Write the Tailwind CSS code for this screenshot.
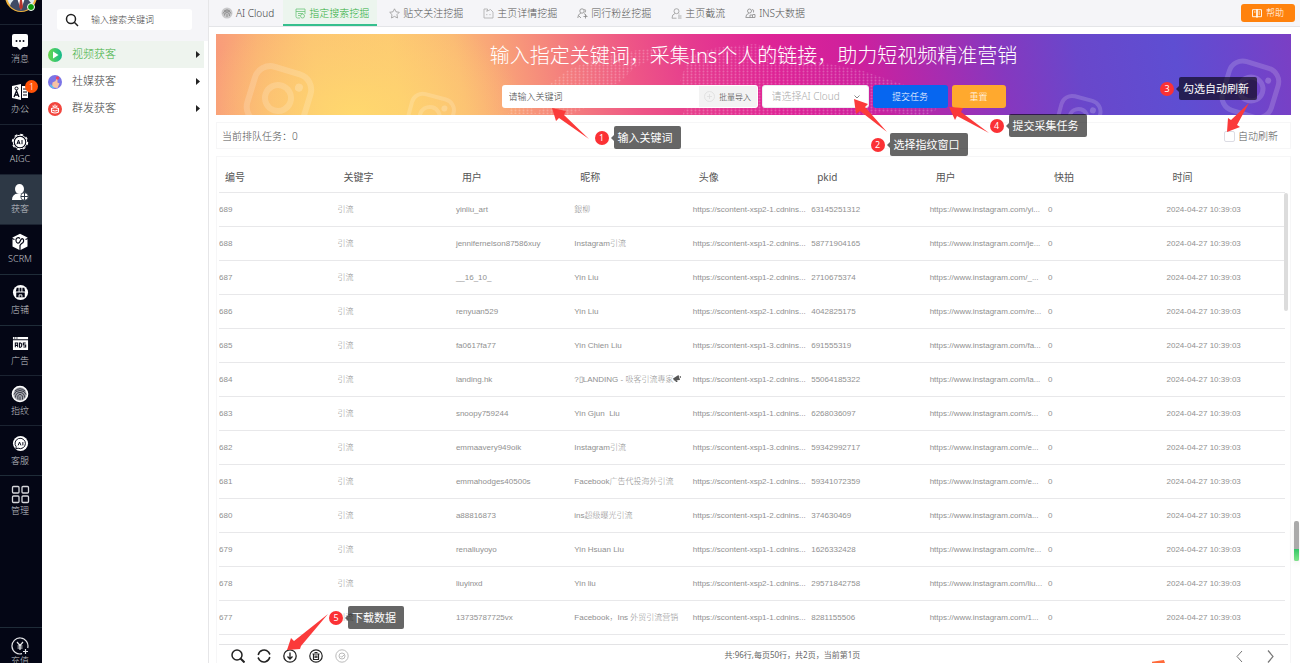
<!DOCTYPE html>
<html lang="zh-CN">
<head>
<meta charset="utf-8">
<meta name="viewport" content="width=device-width, initial-scale=1">
<title>指定搜索挖掘</title>
<script src="https://cdn.jsdelivr.net/npm/@tailwindcss/browser@4"></script>
</head>
<body class="relative flex h-screen overflow-hidden bg-white font-['Noto_Sans','Noto_Sans_CJK_SC',sans-serif] font-light text-[#555]">

<!-- Primary navigation -->
<nav class="flex w-[42px] shrink-0 flex-col overflow-hidden bg-[#040615] text-[9px] leading-3 text-[#c4c6cc]">
  <div class="relative flex h-[25px] shrink-0 items-end justify-center border-b border-[#1b2331] pb-3">
    <svg class="h-8 w-8 shrink-0" viewBox="0 0 32 32"><circle cx="16" cy="16" r="15" fill="#dfe9ee" stroke="#efb23c" stroke-width="2"/><circle cx="16" cy="12" r="6" fill="#e9b48d"/><path d="M5 26q2-7 8-8l3 3 3-3q6 1 8 8-5 5-11 5T5 26z" fill="#3f4b66"/><path d="M12 18l4 12 4-12-4 2z" fill="#fff"/><path d="M15 20h2l1 7-2 3-2-3z" fill="#b8352c"/></svg>
    <span class="absolute right-[7px] bottom-[13px] h-2 w-2 rounded-full border border-white bg-[#0c9d0c]"></span>
  </div>
  <a href="#" class="flex h-[50px] shrink-0 flex-col items-center gap-[2px] border-b border-[#1b2331] pr-[2px] pt-2">
    <svg class="h-[18px] w-[18px]" viewBox="0 0 18 18"><path d="M3 1h12a2 2 0 0 1 2 2v9a2 2 0 0 1-2 2h-3l-3 3-3-3H3a2 2 0 0 1-2-2V3a2 2 0 0 1 2-2z" fill="#fff"/><g fill="#040615"><circle cx="5.500" cy="8" r="1"/><circle cx="9" cy="8" r="1"/><circle cx="12.500" cy="8" r="1"/></g></svg>
    <span>消息</span>
  </a>
  <a href="#" class="relative flex h-[50px] shrink-0 flex-col items-center gap-[2px] border-b border-[#1b2331] pr-[2px] pt-2">
    <svg class="h-[18px] w-[18px]" viewBox="0 0 18 18"><path d="M1 3l9-2v16l-9-2z" fill="#fff"/><path d="M11 3h6v12h-6z" fill="#fff"/><path d="M12 6h4M12 9h4M12 12h4" stroke="#040615"/><circle cx="5.500" cy="5.500" r="1.500" fill="none" stroke="#040615"/><path d="M3 14l2.500-6L8 14M4 12h3" fill="none" stroke="#040615" stroke-width="1.300"/></svg>
    <span>办公</span>
    <span class="absolute top-[5px] left-[25px] flex h-[13px] w-[13px] items-center justify-center rounded-full bg-[#ff5208] text-[9px] text-white">1</span>
  </a>
  <a href="#" class="flex h-[50px] shrink-0 flex-col items-center gap-[2px] border-b border-[#1b2331] pr-[2px] pt-2">
    <svg class="h-[18px] w-[18px]" viewBox="0 0 18 18"><circle cx="9" cy="9" r="6.800" fill="none" stroke="#fff" stroke-width="1"/><circle cx="9" cy="9" r="7.600" fill="none" stroke="#fff" stroke-width="1.200" stroke-dasharray="3 2.970"/><circle cx="9" cy="9" r="5.200" fill="#fff"/><path d="M6 11.200L7.500 7 9 11.200M6.500 10h2M11 7v4.200" stroke="#040615" fill="none"/></svg>
    <span>AIGC</span>
  </a>
  <a href="#" class="flex h-[50px] shrink-0 flex-col items-center gap-[2px] border-b border-[#1b2331] bg-[#2d3845] pr-[2px] pt-2">
    <svg class="h-[18px] w-[18px]" viewBox="0 0 18 18"><ellipse cx="8.500" cy="6" rx="4.500" ry="5" fill="#fff"/><path d="M1 17q0-6 6-6.500h3q3 0 4 1.500v5z" fill="#fff"/><circle cx="13.500" cy="13.500" r="3.800" fill="#fff" stroke="#2d3845" stroke-width=".8"/><path d="M13.500 10v7M10 13.500h7" stroke="#2d3845" stroke-width="1"/></svg>
    <span>获客</span>
  </a>
  <a href="#" class="flex h-[50px] shrink-0 flex-col items-center gap-[2px] border-b border-[#1f2c38] pr-[2px] pt-2">
    <svg class="h-[18px] w-[18px]" viewBox="0 0 18 18"><path d="M9 .8l7.500 3.700v9L9 17.200 1.500 13.500v-9z" fill="#fff"/><path d="M9 5.500C7 3.500 4.500 5.500 5 8s3 3 4 .500S11 5 12 6s1 4-1.500 4.500L9 12.500V18M1 5.500l2.500 1M17 5.500l-2.500 1" fill="none" stroke="#040615" stroke-width="1.200"/></svg>
    <span>SCRM</span>
  </a>
  <a href="#" class="flex h-[51px] shrink-0 flex-col items-center gap-[3px] border-b border-[#1f2c38] pr-[2px] pt-[9px]">
    <svg class="h-[17px] w-[17px]" viewBox="0 0 18 18"><circle cx="9" cy="9" r="8" fill="#fff"/><path d="M5 4h2v4H4zM8 4h2v4H8zM11 4h2l1 4h-3zM4.500 9h9v5h-9z" fill="#040615"/><path d="M7.500 14v-2.500h3V14" fill="none" stroke="#fff"/></svg>
    <span>店铺</span>
  </a>
  <a href="#" class="flex h-[50px] shrink-0 flex-col items-center gap-[3px] border-b border-[#1b2331] pr-[2px] pt-[9px]">
    <svg class="h-[17px] w-[17px]" viewBox="0 0 18 18"><path d="M1 2h16v2.500H1zM1 5.500h16V16H1z" fill="#fff"/><path d="M2 3.200h1.500M4.500 3.200H6" stroke="#040615"/><path d="M3.500 13V8.500h2.500V13M3.500 11H6M8 8.500V13h1.200l1-1V9.500l-1-1zM14.500 8.500H12v2h2.500v2.300H12" fill="none" stroke="#040615" stroke-width="1.100"/></svg>
    <span>广告</span>
  </a>
  <a href="#" class="flex h-[50px] shrink-0 flex-col items-center gap-[2px] border-b border-[#1b2331] pr-[2px] pt-[9px]">
    <svg class="h-[18px] w-[18px]" viewBox="0 0 18 18"><circle cx="9" cy="9" r="7.500" fill="#a9abb2" stroke="#fff" stroke-width="1.600"/><g fill="none" stroke="#1a1c2a" stroke-width=".8"><path d="M4 6q5-4.500 10 0M3 9.500q1-4 6-4t6 4M4.500 12.500q0-5 4.500-5t4.500 5M7 14.500q-1-5 2-5t2.500 5M9 11.500V15"/></g></svg>
    <span>指纹</span>
  </a>
  <a href="#" class="flex h-[50px] shrink-0 flex-col items-center gap-[3px] border-b border-[#1f2c38] pr-[2px] pt-[9px]">
    <svg class="h-[17px] w-[17px]" viewBox="0 0 18 18"><circle cx="9" cy="9" r="8" fill="#fff"/><path d="M4.500 12.500a5.500 5.500 0 1 1 2 1.500l-2.500.5z" fill="none" stroke="#040615"/><path d="M6.500 11L8 7.500 9.500 11M11.500 7.500V11" fill="none" stroke="#040615"/></svg>
    <span>客服</span>
  </a>
  <a href="#" class="flex shrink-0 flex-col items-center gap-[1px] pr-[2px] pt-[9px]">
    <svg class="h-[19px] w-[19px]" viewBox="0 0 19 19" fill="none" stroke="#d5d6da" stroke-width="1.300"><rect x="1.500" y="1.500" width="6.500" height="6.500" rx="1"/><rect x="11" y="1.500" width="6.500" height="6.500" rx="1"/><rect x="1.500" y="11" width="6.500" height="6.500" rx="1"/><rect x="11" y="11" width="6.500" height="6.500" rx="1"/></svg>
    <span>管理</span>
  </a>
  <a href="#" class="mt-auto flex h-9 shrink-0 flex-col items-center overflow-hidden border-t border-[#1f2c38] pr-[2px] pt-[9px]">
    <svg class="h-[18px] w-[18px] shrink-0" viewBox="0 0 18 18" fill="none" stroke="#e4e5e8" stroke-width="1.200"><path d="M16.700 11A8 8 0 1 0 11 16.700"/><path d="M6 5l3 3.500L12 5M9 8.500V13M6.500 9h5M6.500 11h5M14.500 12v5M12 14.500h5"/></svg>
    <span class="shrink-0">充值</span>
  </a>
</nav>

<!-- Secondary navigation -->
<aside class="flex w-[167px] shrink-0 flex-col border-r border-[#e6e6e8] bg-white">
  <div class="bg-[#f5f5f8] pt-[9px] pr-4 pb-[11px] pl-[15px]">
    <label class="flex h-[21px] items-center gap-3 rounded-[3px] bg-white pl-2">
      <svg class="h-[14px] w-[14px] shrink-0" viewBox="0 0 14 14" fill="none" stroke="#222" stroke-width="1.500"><circle cx="6" cy="6" r="4.500"/><path d="M9.300 9.300L13 13"/></svg>
      <input type="text" aria-label="搜索" placeholder="输入搜索关键词" class="w-full min-w-0 bg-transparent text-[9px] leading-4 outline-none placeholder:text-[#444]">
    </label>
  </div>
  <a href="#" class="mr-1 flex h-[27px] items-center gap-[10px] bg-[#eef4ee] pr-1 pl-[6px] text-[11px] text-[#3fb03f]">
    <svg class="h-[14px] w-[14px]" viewBox="0 0 14 14"><defs><linearGradient id="g1"><stop offset="0" stop-color="#6bd84b"/><stop offset="1" stop-color="#14b98b"/></linearGradient></defs><circle cx="7" cy="7" r="7" fill="url(#g1)"/><path d="M5 3.500v7L10.500 7z" fill="#fff"/></svg>
    <span class="flex-1">视频获客</span>
    <svg class="h-[7px] w-[5px]" viewBox="0 0 5 7"><path d="M1 0l4 3.500L1 7z" fill="#222"/></svg>
  </a>
  <a href="#" class="mr-1 flex h-[27px] items-center gap-[10px] pr-1 pl-[6px] text-[11px] text-[#444]">
    <svg class="h-[14px] w-[14px]" viewBox="0 0 14 14"><circle cx="7" cy="7" r="7" fill="#7b74e6"/><path d="M4 12.500l.5-5 3-1.500 1-3 1 .5v4l2 1-2 4.500z" fill="#f6c2a5"/><path d="M2.500 9l4 4-2 .3L2 11z" fill="#58c1f2"/><circle cx="9.500" cy="3" r="1.700" fill="#e9466b"/></svg>
    <span class="flex-1">社媒获客</span>
    <svg class="h-[7px] w-[5px]" viewBox="0 0 5 7"><path d="M1 0l4 3.500L1 7z" fill="#222"/></svg>
  </a>
  <a href="#" class="mr-1 flex h-[27px] items-center gap-[10px] pr-1 pl-[6px] text-[11px] text-[#444]">
    <svg class="h-[14px] w-[14px]" viewBox="0 0 14 14"><circle cx="7" cy="7" r="7" fill="#f2453d"/><path d="M7 2.500v3M4.800 3.500l.8 1.500M9.200 3.500L8.400 5M3.500 6.500q3.500-1.500 7 0v3.500q-3.500 2-7 0zM4.500 8q2.500 2 5 0" fill="none" stroke="#fff" stroke-width="1.100"/></svg>
    <span class="flex-1">群发获客</span>
    <svg class="h-[7px] w-[5px]" viewBox="0 0 5 7"><path d="M1 0l4 3.500L1 7z" fill="#222"/></svg>
  </a>
</aside>

<main class="flex min-w-0 flex-1 flex-col">
  <!-- Tabs -->
  <header class="flex h-[27px] shrink-0 items-stretch border-b border-[#e4e5e8] bg-[#f5f5f8] text-[10px] text-[#555]">
    <a href="#" class="flex items-center gap-[3px] pr-[9px] pl-3 text-[#444]">
      <svg class="h-3 w-3" viewBox="0 0 12 12"><circle cx="6" cy="6" r="5.500" fill="#c9c9cb"/><path d="M3 4q3-2.500 6 0M2 6.500q.5-2.500 4-2.500t4 2.500M3.500 8.500Q3 5.500 6 5.500t2.500 3.500M6 7v3" fill="none" stroke="#777" stroke-width=".7"/></svg>AI Cloud</a>
    <a href="#" aria-current="page" class="flex items-center gap-[3px] border-b-2 border-[#35bf8d] bg-[#ecf5ee] pt-[2px] pr-2 pl-3 text-[#2fae3c]">
      <svg class="h-[11px] w-[11px]" viewBox="0 0 11 11" fill="none" stroke="#6cc478" stroke-width=".8"><path d="M5 10H2.500Q1 10 1 8.500V1h9v5M1 3.500h9M3 5.500h5M3 7.500h2"/><circle cx="7.500" cy="8" r="2"/></svg>指定搜索挖掘</a>
    <a href="#" class="flex items-center gap-[3px] pr-2 pl-3">
      <svg class="h-[11px] w-[11px]" viewBox="0 0 11 11" fill="none" stroke="#999" stroke-width=".8"><path d="M5.500.8l1.500 3 3.300.5L8 6.600l.5 3.400-3-1.600-3 1.600L3 6.600.7 4.300 4 3.800z"/></svg>贴文关注挖掘</a>
    <a href="#" class="flex items-center gap-[3px] pr-2 pl-3">
      <svg class="h-[11px] w-[11px]" viewBox="0 0 11 11" fill="none" stroke="#aaa" stroke-width=".8"><path d="M1 10V1h3.500v2L7.500 1.500 10 4v6zM3.800 6v1.200M7 6v1.200M4.500 3H3"/></svg>主页详情挖掘</a>
    <a href="#" class="flex items-center gap-[3px] pr-2 pl-3">
      <svg class="h-[11px] w-[11px]" viewBox="0 0 11 11" fill="none" stroke="#888" stroke-width=".8"><circle cx="5" cy="3" r="2.200"/><path d="M.8 10q0-4 3-4.800M7 5.500l2.500 2M7.500 1q2 1.500.5 3.500M6.500 8.500h4M8.500 6.500v4M2 8l2 2"/></svg>同行粉丝挖掘</a>
    <a href="#" class="flex items-center gap-[3px] pr-2 pl-3">
      <svg class="h-[11px] w-[11px]" viewBox="0 0 11 11" fill="none" stroke="#999" stroke-width=".8"><circle cx="5.500" cy="3.200" r="2.500"/><path d="M1 10.200q0-4 3-4.700M1 10.200h4.500M7.500 6h1M7 8h3.500M7 10h3.500"/></svg>主页截流</a>
    <a href="#" class="flex items-center gap-[3px] pr-2 pl-3">
      <svg class="h-[11px] w-[11px]" viewBox="0 0 11 11" fill="none" stroke="#888" stroke-width=".8"><circle cx="4.500" cy="3" r="2"/><path d="M.8 9.500q0-3.500 3-4M.8 9.500H10V6.500H7.500M7 1.500q2.500 0 1.500 3M5 9.500V7h2.500v2.500"/></svg>INS大数据</a>
    <a href="#" class="my-1 mr-[5px] ml-auto flex w-[54px] items-center justify-center gap-1 rounded-[3px] bg-[#ff820d] text-[9px] text-white">
      <svg class="h-[9px] w-[10px]" viewBox="0 0 10 9" fill="none" stroke="#fff" stroke-width=".9"><path d="M.5.700h4.500v7H.5zM5 .7h4.500v7H5zM5 0v9M2 3h1.500M6.500 3H8M6.500 5H8"/></svg>帮助</a>
  </header>

  <div class="flex min-h-0 flex-1 flex-col gap-[7px] pt-[7px] pr-[9px] pl-[7px]">
    <!-- Banner -->
    <section class="relative flex h-[81px] shrink-0 flex-col items-center bg-[radial-gradient(ellipse_170px_110px_at_13%_100%,#ffd86e_0%,#fed47099_45%,#fed47000_100%),linear-gradient(80deg,#f8957b_0%,#fab075_5%,#fcc273_10%,#fdc872_17%,#fbb975_23%,#f89c79_28%,#f3767f_34%,#ee5686_39%,#e53a8f_45%,#de2496_52%,#cd209d_60%,#a82cb0_67%,#8638bf_73%,#6947cb_80%,#5e4ed2_89%,#6c46cc_95%,#7b3fc4_100%)]">
      <svg class="absolute inset-y-0 left-0 h-[81px] w-[190px]" viewBox="0 0 190 81" fill="none" stroke="#fff" stroke-opacity=".17"><g transform="rotate(17 62 64)"><rect x="34" y="35" width="58" height="58" rx="16" stroke-width="6"/><circle cx="62" cy="64" r="13" stroke-width="6"/><circle cx="79" cy="48" r="4" fill="#fff" fill-opacity=".2" stroke="none"/></g></svg>
      <svg class="absolute top-0 left-[185px] h-[81px] w-[60px]" viewBox="0 0 60 81" fill="none" stroke="#fff" stroke-opacity=".17"><g transform="rotate(15 29 82)"><rect x="8" y="62" width="43" height="40" rx="11" stroke-width="4"/><circle cx="29" cy="83" r="10" stroke-width="4"/><circle cx="41" cy="71" r="3" fill="#fff" fill-opacity=".2" stroke="none"/></g></svg>
      <svg class="absolute top-0 right-0 h-[81px] w-[250px]" viewBox="0 0 250 81" fill="none" stroke="#fff" stroke-opacity=".17"><g transform="rotate(17 210 55)"><rect x="184" y="30" width="51" height="51" rx="14" stroke-width="5"/><circle cx="210" cy="55" r="12" stroke-width="5"/><circle cx="224" cy="42" r="3" fill="#fff" fill-opacity=".2" stroke="none"/></g><g transform="rotate(15 38 82)"><rect x="18" y="64" width="40" height="40" rx="11" stroke-width="4"/><circle cx="38" cy="84" r="9" stroke-width="4"/><circle cx="50" cy="73" r="3" fill="#fff" fill-opacity=".2" stroke="none"/></g></svg>
      <svg class="absolute top-0 left-1/2 h-[81px] w-[504px] -translate-x-1/2" viewBox="0 0 504 81"><defs><pattern id="dots" width="4" height="3" patternUnits="userSpaceOnUse"><circle cx="1.500" cy="1.500" r="1" fill="#fff"/></pattern></defs><path fill="url(#dots)" opacity=".24" d="M48 50l18-14 30-12 40-8 26-2-6 8-24 12-14 14-18 8-8 14-26 12-30-2zM188 22l24-8 40-4 34 6 12 8 60 12 60 20 24 16-20 10-40-4-24 4H180l6-14-8-22zM8 74l20-4 6 10H6z"/></svg>

      <h1 class="relative pt-[7px] text-[20px] leading-[30px] text-white">输入指定关键词，采集Ins个人的链接，助力短视频精准营销</h1>

      <form class="relative mt-[14px] flex h-[23px] gap-1 text-[9px]" onsubmit="return false">
        <div class="flex w-[256px] items-stretch rounded-[3px] bg-white p-[1px]">
          <input type="text" aria-label="关键词" placeholder="请输入关键词" class="min-w-0 flex-1 bg-transparent pl-[6px] outline-none placeholder:text-[#444]">
          <button type="button" class="flex w-[58px] items-center justify-center gap-1 rounded-r-[2px] bg-[#f3f3f3] text-[8px] text-[#444]">
            <svg class="h-[11px] w-[11px]" viewBox="0 0 11 11" fill="none" stroke="#ddd" stroke-width=".8"><circle cx="5.500" cy="5.500" r="5"/><path d="M5.500 3v5M3 5.500h5"/></svg>批量导入</button>
        </div>
        <div class="relative flex w-[107px]">
          <select aria-label="AI Cloud" class="w-full appearance-none rounded-[3px] border border-[#ececf0] bg-white pl-[9px] text-[10px] text-[#aaa] outline-none"><option>请选择AI Cloud</option></select>
          <svg class="pointer-events-none absolute top-[10px] right-[9px] h-[4px] w-[6px]" viewBox="0 0 6 4" fill="none" stroke="#888"><path d="M.5.500L3 3 5.500.5"/></svg>
        </div>
        <button type="submit" class="w-[75px] rounded-[3px] bg-[#0666f0] text-white">提交任务</button>
        <button type="reset" class="w-[54px] rounded-[3px] bg-[#ffa92e] text-white">重置</button>

        <!-- Step 1 -->
        <svg class="absolute top-[23px] left-[49px] z-10 h-[32px] w-[40px]" viewBox="0 0 40 32"><path d="M1 0l14 3-2 4 25 24L8 10l-3 3z" fill="#fb3a3a"/></svg>
        <div class="absolute top-[41px] left-[93px] z-10 flex items-center whitespace-nowrap">
          <span class="flex h-[14px] w-[14px] items-center justify-center rounded-full bg-[#fb3135] text-[9px] font-normal text-white">1</span>
          <svg class="ml-[2px] h-[6px] w-[3px]" viewBox="0 0 3 6"><path d="M0 3l3-3v6z" fill="#000" fill-opacity=".6"/></svg>
          <span class="rounded-[2px] bg-black/60 px-1 py-[3px] pr-2 text-[11px] leading-[17px] font-normal text-white">输入关键词</span>
        </div>
        <!-- Step 2 -->
        <svg class="absolute top-[14px] left-[351px] z-10 h-[34px] w-[36px]" viewBox="0 0 36 34"><path d="M1 0l14 5-3 3 22 25L7 12l-4 3z" fill="#fb3a3a"/></svg>
        <div class="absolute top-[48px] left-[369px] z-10 flex items-center whitespace-nowrap">
          <span class="flex h-[14px] w-[14px] items-center justify-center rounded-full bg-[#fb3135] text-[9px] font-normal text-white">2</span>
          <svg class="ml-[2px] h-[6px] w-[3px]" viewBox="0 0 3 6"><path d="M0 3l3-3v6z" fill="#000" fill-opacity=".6"/></svg>
          <span class="rounded-[2px] bg-black/60 px-1 py-[3px] pr-2 text-[11px] leading-[17px] font-normal text-white">选择指纹窗口</span>
        </div>
        <!-- Step 4 -->
        <svg class="absolute top-[21px] left-[446px] z-10 h-[28px] w-[42px]" viewBox="0 0 42 28"><path d="M1 1l14 1-2 4 28 21L9 10l-2 4z" fill="#fb3a3a"/></svg>
        <div class="absolute top-[29px] left-[488px] z-10 flex items-center whitespace-nowrap">
          <span class="flex h-[14px] w-[14px] items-center justify-center rounded-full bg-[#fb3135] text-[9px] font-normal text-white">4</span>
          <svg class="ml-[2px] h-[6px] w-[3px]" viewBox="0 0 3 6"><path d="M0 3l3-3v6z" fill="#000" fill-opacity=".6"/></svg>
          <span class="rounded-[2px] bg-black/60 px-1 py-[3px] pr-2 text-[11px] leading-[17px] font-normal text-white">提交采集任务</span>
        </div>
      </form>
    </section>

    <!-- Queue status -->
    <section class="relative flex h-[27px] shrink-0 items-center justify-between border border-[#f6f6f7] pt-[2px] pr-3 pl-[5px] text-[10px]">
      <p>当前排队任务：0</p>
      <label class="flex items-center gap-[3px]"><input type="checkbox" class="h-[11px] w-[11px] appearance-none rounded-[2px] border border-[#dcdce4] bg-white">自动刷新</label>
      <!-- Step 3 -->
      <svg class="absolute right-[40px] bottom-[15px] z-10 h-[30px] w-[24px]" viewBox="0 0 24 30"><path d="M1 29l1-14 3 2L23 0 11 22l3 2z" fill="#fb3a3a"/></svg>
      <div class="absolute right-[33px] bottom-[48px] z-10 flex items-center whitespace-nowrap">
        <span class="flex h-[14px] w-[14px] items-center justify-center rounded-full bg-[#fb3135] text-[9px] font-normal text-white">3</span>
        <svg class="ml-[2px] h-[6px] w-[3px]" viewBox="0 0 3 6"><path d="M0 3l3-3v6z" fill="#000" fill-opacity=".6"/></svg>
        <span class="rounded-[2px] bg-black/60 px-1 py-[3px] pr-2 text-[11px] leading-[17px] font-normal text-white">勾选自动刷新</span>
      </div>
    </section>

    <!-- Results -->
    <section class="flex min-h-0 flex-1 flex-col border-x border-t border-[#f6f6f7] pr-[2px] pl-[2px]">
      <div class="relative min-h-0 flex-1 overflow-hidden pr-[3px]">
        <table class="w-full table-fixed border-separate border-spacing-0 text-left">
          <thead>
            <tr class="text-[10px] text-[#555]">
              <th class="h-9 border-b border-[#e8e8ea] pt-[5px] pl-[6px] font-normal">编号</th>
              <th class="h-9 border-b border-[#e8e8ea] pt-[5px] pl-[6px] font-normal">关键字</th>
              <th class="h-9 border-b border-[#e8e8ea] pt-[5px] pl-[6px] font-normal">用户</th>
              <th class="h-9 border-b border-[#e8e8ea] pt-[5px] pl-[6px] font-normal">昵称</th>
              <th class="h-9 border-b border-[#e8e8ea] pt-[5px] pl-[6px] font-normal">头像</th>
              <th class="h-9 border-b border-[#e8e8ea] pt-[5px] pl-[6px] font-normal">pkid</th>
              <th class="h-9 border-b border-[#e8e8ea] pt-[5px] pl-[6px] font-normal">用户</th>
              <th class="h-9 border-b border-[#e8e8ea] pt-[5px] pl-[6px] font-normal">快拍</th>
              <th class="h-9 border-b border-[#e8e8ea] pt-[5px] pl-[6px] font-normal">时间</th>
            </tr>
          </thead>
          <tbody id="rows" class="font-['Liberation_Sans','Noto_Sans_CJK_SC',sans-serif] text-[8px] text-[#909090]"></tbody>
        </table>
        <span class="absolute top-9 right-0 h-[118px] w-1 rounded-[2px] bg-[#dcdcdc]"></span>
      </div>
      <footer class="relative flex h-[19px] shrink-0 items-start justify-between overflow-visible border-t border-[#e3e3e5] pt-1">
        <div class="flex items-center gap-3 pl-3 text-[#222]">
          <button type="button" aria-label="搜索"><svg class="block h-[14px] w-[14px]" viewBox="0 0 14 14" fill="none" stroke="currentColor" stroke-width="1.500"><circle cx="6" cy="6" r="5"/><path d="M9.500 9.500L13.500 13.500" stroke-width="2"/></svg></button>
          <button type="button" aria-label="刷新"><svg class="block h-[14px] w-[14px]" viewBox="0 0 14 14" fill="none" stroke="currentColor" stroke-width="1.500"><path d="M1.200 6A6 6 0 0 1 11.500 3M12.800 8A6 6 0 0 1 2.500 11M1 8.500l1.500 2.500M13 5.500L11.500 3"/></svg></button>
          <button type="button" aria-label="下载"><svg class="block h-[14px] w-[14px]" viewBox="0 0 14 14" fill="none" stroke="currentColor" stroke-width="1.300"><circle cx="7" cy="7" r="6.200"/><path d="M7 3.500v6.500M4.500 7.500L7 10l2.500-2.500"/></svg></button>
          <button type="button" aria-label="删除"><svg class="block h-[14px] w-[14px]" viewBox="0 0 14 14" fill="none" stroke="currentColor" stroke-width="1.200"><circle cx="7" cy="7" r="6.200"/><path d="M3.500 5h7M4.500 5v5.500h5V5M5.500 3.500h3M6.200 6.500V9M7.800 6.500V9"/></svg></button>
          <button type="button" aria-label="完成" class="text-[#bbb]"><svg class="block h-[14px] w-[14px]" viewBox="0 0 14 14" fill="none" stroke="currentColor"><circle cx="7" cy="7" r="6.200"/><circle cx="7" cy="7" r="3"/><path d="M5.500 7l1.200 1.200L9 6"/></svg></button>
        </div>
        <p class="absolute top-1 left-1/2 -ml-[29px] text-[8px] leading-3 font-normal whitespace-nowrap text-[#666]">共:96行,每页50行，共2页，当前第1页</p>
        <span class="absolute right-[123px] bottom-0 h-[3px] w-[13px] bg-[#ff6a3a] [clip-path:polygon(0_100%,0_60%,92%_0,100%_100%)]"></span>
        <div class="flex items-center gap-6 pr-[14px] text-[#777]">
          <button type="button" aria-label="上一页"><svg class="block h-[14px] w-[7px]" viewBox="0 0 7 14" fill="none" stroke="currentColor"><path d="M6 2L1 7.500 6 13"/></svg></button>
          <button type="button" aria-label="下一页"><svg class="block h-[14px] w-[7px]" viewBox="0 0 7 14" fill="none" stroke="currentColor" stroke-width="1.200"><path d="M1 1.500l5 6-5 6"/></svg></button>
        </div>
        <!-- Step 5 -->
        <svg class="absolute bottom-[12px] left-[67px] z-10 h-[38px] w-[43px]" viewBox="0 0 43 38"><path d="M1 37L5 25l3 3L42 1 15 33l-1 3z" fill="#fb3a3a"/></svg>
        <div class="absolute bottom-[34px] left-[110px] z-10 flex items-center whitespace-nowrap">
          <span class="flex h-[14px] w-[14px] items-center justify-center rounded-full bg-[#fb3135] text-[9px] font-normal text-white">5</span>
          <svg class="ml-[2px] h-[6px] w-[3px]" viewBox="0 0 3 6"><path d="M0 3l3-3v6z" fill="#000" fill-opacity=".6"/></svg>
          <span class="rounded-[2px] bg-black/60 px-1 py-[3px] pr-2 text-[11px] leading-[17px] font-normal text-white">下载数据</span>
        </div>
      </footer>
    </section>
  </div>
</main>

<!-- Page-level scroll marker -->
<div class="absolute right-[1px] bottom-[102px] flex h-10 w-[5px] flex-col overflow-hidden rounded-[2px] bg-[#aaa] shadow-md"><span class="mt-auto h-3 bg-linear-to-b from-[#2fc568] to-[#7de88a]"></span></div>

<script>
const horn = '<svg class="inline-block h-[7px] w-2 align-baseline" viewBox="0 0 8 7"><path d="M0 3.500L5.500 0 7 5 1 5.500zM2 5.500l1 1.500h1.500L4 5z" fill="#555"/><path d="M7 1l1 2" stroke="#555"/></svg>';
const data = [
  [689, 'yinliu_art', '銀柳', '2-1', '63145251312', 'yi...'],
  [688, 'jennifernelson87586xuy', 'Instagram引流', '1-2', '58771904165', 'je...'],
  [687, '__16_10_', 'Yin Liu', '1-2', '2710675374', '_...'],
  [686, 'renyuan529', 'Yin Liu', '2-1', '4042825175', 're...'],
  [685, 'fa0617fa77', 'Yin Chien Liu', '1-3', '691555319', 'fa...'],
  [684, 'landing.hk', '?▯LANDING - 吸客引流專家' + horn, '1-2', '55064185322', 'la...'],
  [683, 'snoopy759244', 'Yin Gjun  Liu', '1-1', '6268036097', 's...'],
  [682, 'emmaavery949oik', 'Instagram引流', '1-3', '59342992717', 'e...'],
  [681, 'emmahodges40500s', 'Facebook广告代投海外引流', '2-1', '59341072359', 'e...'],
  [680, 'a88816873', 'ins超级曝光引流', '1-2', '374630469', 'a...'],
  [679, 'renaliuyoyo', 'Yin Hsuan Liu', '1-1', '1626332428', 're...'],
  [678, 'liuyinxd', 'Yin liu', '2-1', '29571842758', 'liu...'],
  [677, '13735787725vx', 'Facebook，Ins 外贸引流营销', '1-1', '8281155506', '1...'],
];
document.getElementById('rows').innerHTML = data.map(([id, user, nick, host, pk, path]) =>
  '<tr>' + [id, '引流', user, nick, 'https://scontent-xsp' + host + '.cdnins...', pk,
    'https://www.instagram.com/' + path, 0, '2024-04-27 10:39:03']
    .map(v => '<td class="h-[34px] border-b border-[#e8e8ea] p-0 whitespace-pre">' + v + '</td>').join('') + '</tr>').join('');
</script>
</body>
</html>
